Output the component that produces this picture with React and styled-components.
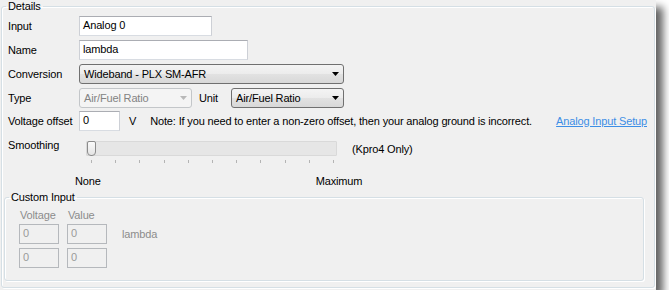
import React from "react";
import styled, { createGlobalStyle } from "styled-components";

const GlobalStyle = createGlobalStyle`
  html, body {
    margin: 0;
    padding: 0;
    background: #fff;
  }
  body {
    font-family: "Liberation Sans", Arial, sans-serif;
    font-size: 11px;
    letter-spacing: -0.15px;
    color: #000;
  }
`;

const Window = styled.div`
  width: 656px;
  height: 290px;
  background: #f0f0f0;
  box-shadow: 7px 7px 8px rgba(0, 0, 0, 0.62);
  padding: 0 1px 0 1px;
  box-sizing: border-box;
`;

const Group = styled.fieldset`
  margin: 0;
  padding: 0;
  height: ${p => p.$height}px;
  box-sizing: border-box;
  border: 1px solid #d5dfe5;
  border-radius: 3px;
  box-shadow: inset 1px 1px 0 #fff, 1px 1px 0 #fff;
  min-width: 0;
`;

const Legend = styled.legend`
  padding: 0 2px;
  margin-left: 4px;
  line-height: 13px;
  height: 13px;
`;

const Rows = styled.div`
  display: flex;
  flex-direction: column;
  padding: 3px 0 0 6px;
`;

const Row = styled.div`
  display: flex;
  align-items: center;
  height: 20px;
  margin-bottom: 4px;
`;

const Label = styled.span`
  width: ${p => p.$w || 71}px;
  flex: none;
  white-space: nowrap;
`;

const Text = styled.span`
  white-space: nowrap;
  margin-left: ${p => p.$ml || 0}px;
  color: ${p => (p.$disabled ? "#8c8c8c" : "#000")};
`;

const TextBox = styled.div`
  width: ${p => p.$w}px;
  height: 20px;
  box-sizing: border-box;
  flex: none;
  background: ${p => (p.$disabled ? "#f0f0f0" : "#fff")};
  border: 1px solid;
  border-color: ${p =>
    p.$disabled ? "#b5b8bc" : "#abadb3 #cdd0d6 #d8dce2 #cdd0d6"};
  color: ${p => (p.$disabled ? "#9a9a9a" : "#000")};
  padding: 2px 0 0 3px;
  line-height: 13px;
  white-space: nowrap;
`;

const Combo = styled.div`
  width: ${p => p.$w}px;
  height: 20px;
  box-sizing: border-box;
  flex: none;
  display: flex;
  align-items: center;
  justify-content: space-between;
  padding: 0 4px 0 4px;
  border: 1px solid ${p => (p.$disabled ? "#c3c6c9" : "#707070")};
  border-radius: 3px;
  background: ${p =>
    p.$disabled
      ? "#f4f4f4"
      : "linear-gradient(#f4f4f4 0%, #ececec 50%, #e2e2e2 51%, #d8d8d8 100%)"};
  color: ${p => (p.$disabled ? "#838383" : "#000")};
  white-space: nowrap;
`;

const Arrow = ({ color = "#000" }) => (
  <svg width="7" height="4" viewBox="0 0 7 4">
    <path d="M0 0h7L3.5 4z" fill={color} />
  </svg>
);

const Link = styled.a`
  color: #3d8ee6;
  text-decoration: underline;
  margin-left: auto;
  margin-right: 7px;
  white-space: nowrap;
`;

const SmoothRow = styled.div`
  display: flex;
  align-items: flex-start;
  margin-top: 2px;
  height: 28px;
`;

const SmoothLabel = styled.span`
  width: 71px;
  flex: none;
  line-height: 13px;
  margin-top: 2px;
`;

const Slider = styled.div`
  width: 260px;
  flex: none;
  padding-left: 7px;
  box-sizing: border-box;
`;

const Track = styled.div`
  position: relative;
  width: 251px;
  height: 15px;
  box-sizing: border-box;
  margin-top: 4px;
  background: #e6e6e6;
  border: 1px solid #d9d9d9;
  border-radius: 1px;
`;

const Thumb = styled.div`
  position: absolute;
  left: 0;
  top: -1px;
  width: 9px;
  height: 15px;
  box-sizing: border-box;
  border: 1px solid #8c8c8c;
  border-radius: 2px 2px 4px 4px;
  background: linear-gradient(#fafafa, #e4e4e4);
`;

const Ticks = styled.div`
  display: flex;
  justify-content: space-between;
  width: 243px;
  margin: 4px 0 0 5px;
`;

const Tick = styled.div`
  width: 1px;
  height: 3px;
  background: #b4b4b4;
`;

const Scale = styled.div`
  display: flex;
  height: 16px;
  align-items: center;
  margin-top: 8px;
`;

const Custom = styled(Group)`
  margin: 2px 0 0 2px;
  width: 640px;
`;

const CustomGrid = styled.div`
  display: grid;
  grid-template-columns: 40px 40px auto;
  column-gap: 8px;
  row-gap: 4px;
  padding: 5px 0 0 14px;
  align-items: center;
  color: #8c8c8c;
`;

const ColHead = styled.span`
  padding-left: ${p => p.$pl || 0}px;
  line-height: 12px;
  margin-bottom: -1px;
`;

const App = () => {
  const ticks = Array.from({ length: 11 });
  return (
    <>
      <GlobalStyle />
      <Window>
        <Group $height={288}>
          <Legend>Details</Legend>
          <Rows>
            <Row>
              <Label>Input</Label>
              <TextBox $w={133}>Analog 0</TextBox>
            </Row>
            <Row>
              <Label>Name</Label>
              <TextBox $w={169}>lambda</TextBox>
            </Row>
            <Row>
              <Label>Conversion</Label>
              <Combo $w={265}>
                Wideband - PLX SM-AFR
                <Arrow />
              </Combo>
            </Row>
            <Row>
              <Label>Type</Label>
              <Combo $w={113} $disabled>
                Air/Fuel Ratio
                <Arrow color="#b8b8b8" />
              </Combo>
              <Label $w={32} style={{ marginLeft: 7 }}>
                Unit
              </Label>
              <Combo $w={113}>
                Air/Fuel Ratio
                <Arrow />
              </Combo>
            </Row>
            <Row style={{ marginTop: -1 }}>
              <Label>Voltage offset</Label>
              <TextBox $w={41}>0</TextBox>
              <Text $ml={9}>V</Text>
              <Text $ml={14}>
                Note: If you need to enter a non-zero offset, then your analog
                ground is incorrect.
              </Text>
              <Link>Analog Input Setup</Link>
            </Row>
            <SmoothRow>
              <SmoothLabel>Smoothing</SmoothLabel>
              <Slider>
                <Track>
                  <Thumb />
                </Track>
                <Ticks>
                  {ticks.map((_, i) => (
                    <Tick key={i} />
                  ))}
                </Ticks>
              </Slider>
              <Text $ml={13} style={{ marginTop: 6 }}>
                (Kpro4 Only)
              </Text>
            </SmoothRow>
            <Scale>
              <Text $ml={67}>None</Text>
              <Text $ml={215}>Maximum</Text>
            </Scale>
          </Rows>
          <Custom $height={90}>
            <Legend>Custom Input</Legend>
            <CustomGrid>
              <ColHead $pl={1}>Voltage</ColHead>
              <ColHead $pl={1}>Value</ColHead>
              <span />
              <TextBox $w={40} $disabled>
                0
              </TextBox>
              <TextBox $w={40} $disabled>
                0
              </TextBox>
              <Text $disabled $ml={7}>
                lambda
              </Text>
              <TextBox $w={40} $disabled>
                0
              </TextBox>
              <TextBox $w={40} $disabled>
                0
              </TextBox>
              <span />
            </CustomGrid>
          </Custom>
        </Group>
      </Window>
    </>
  );
};

export default App;
